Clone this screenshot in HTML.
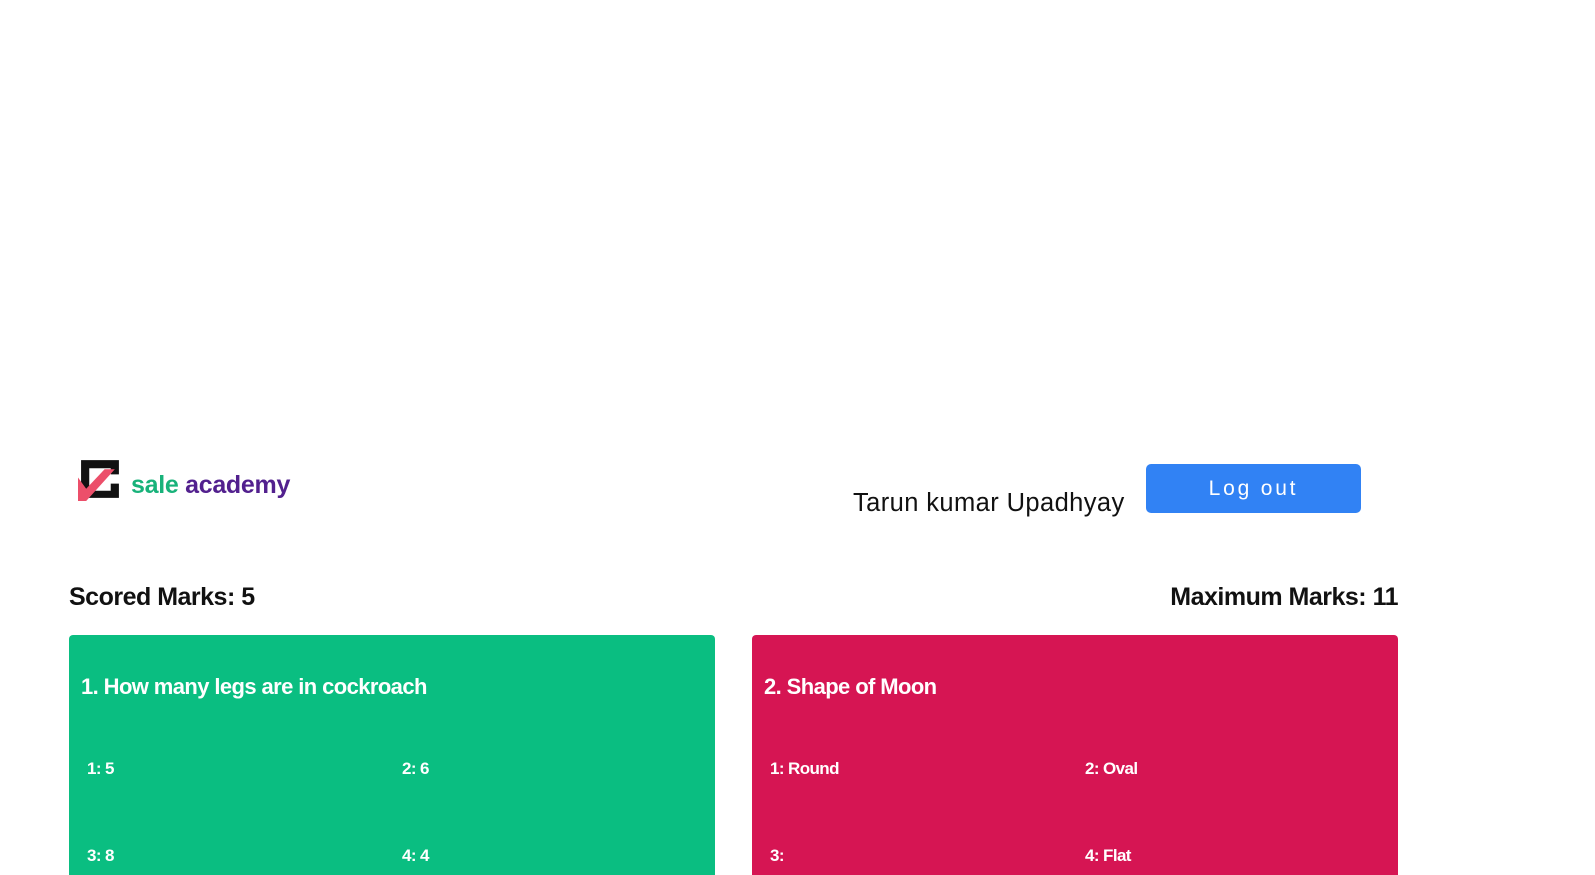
<!DOCTYPE html>
<html><head><meta charset="utf-8"><style>
html,body{margin:0;padding:0;background:#fff;width:1595px;height:858px;overflow:hidden;font-family:"Liberation Sans",sans-serif;}
.a{position:absolute;white-space:nowrap}
.card{position:absolute;top:635px;width:646px;height:240px;border-radius:4px 4px 0 0}
.q{position:absolute;left:12px;top:39px;color:#fff;font-weight:bold;font-size:22px;letter-spacing:-0.6px}
.o{position:absolute;color:#fff;font-weight:bold;font-size:17px;letter-spacing:-0.6px}
</style></head><body>
<svg class="a" style="left:78px;top:457px" width="45" height="44" viewBox="0 0 44 43">
<path d="M3 3 H40 V17 H32 V11 H11 V33 H32 V26 H40 V40 H3 Z" fill="#111"/>
<path d="M0 20 L8 31 L26 12 L36 12 L8 43 L0 43 Z" fill="#ec4f6a"/>
</svg>
<div class="a" style="left:131px;top:471px;font-size:25px;font-weight:bold;letter-spacing:-0.3px"><span style="color:#18b27a">sale</span> <span style="color:#52208e">academy</span></div>
<div class="a" style="left:853px;top:489px;font-size:25.5px;color:#111;letter-spacing:0.4px">Tarun kumar Upadhyay</div>
<div class="a" style="left:1146px;top:464px;width:215px;height:49px;background:#3182f4;border-radius:5px;color:#fff;font-size:21px;letter-spacing:2.8px;text-align:center;line-height:49px">Log out</div>
<div class="a" style="left:69px;top:583px;font-size:25px;font-weight:bold;color:#111;letter-spacing:-0.5px">Scored Marks: 5</div>
<div class="a" style="right:197px;top:583px;font-size:25px;font-weight:bold;color:#111;letter-spacing:-0.5px">Maximum Marks: 11</div>
<div class="card" style="left:69px;background:#0abe81">
<div class="q">1. How many legs are in cockroach</div>
<div class="o" style="left:18px;top:124px">1: 5</div>
<div class="o" style="left:333px;top:124px">2: 6</div>
<div class="o" style="left:18px;top:211px">3: 8</div>
<div class="o" style="left:333px;top:211px">4: 4</div>
</div>
<div class="card" style="left:752px;background:#d61553">
<div class="q">2. Shape of Moon</div>
<div class="o" style="left:18px;top:124px">1: Round</div>
<div class="o" style="left:333px;top:124px">2: Oval</div>
<div class="o" style="left:18px;top:211px">3: </div>
<div class="o" style="left:333px;top:211px">4: Flat</div>
</div>
</body></html>
